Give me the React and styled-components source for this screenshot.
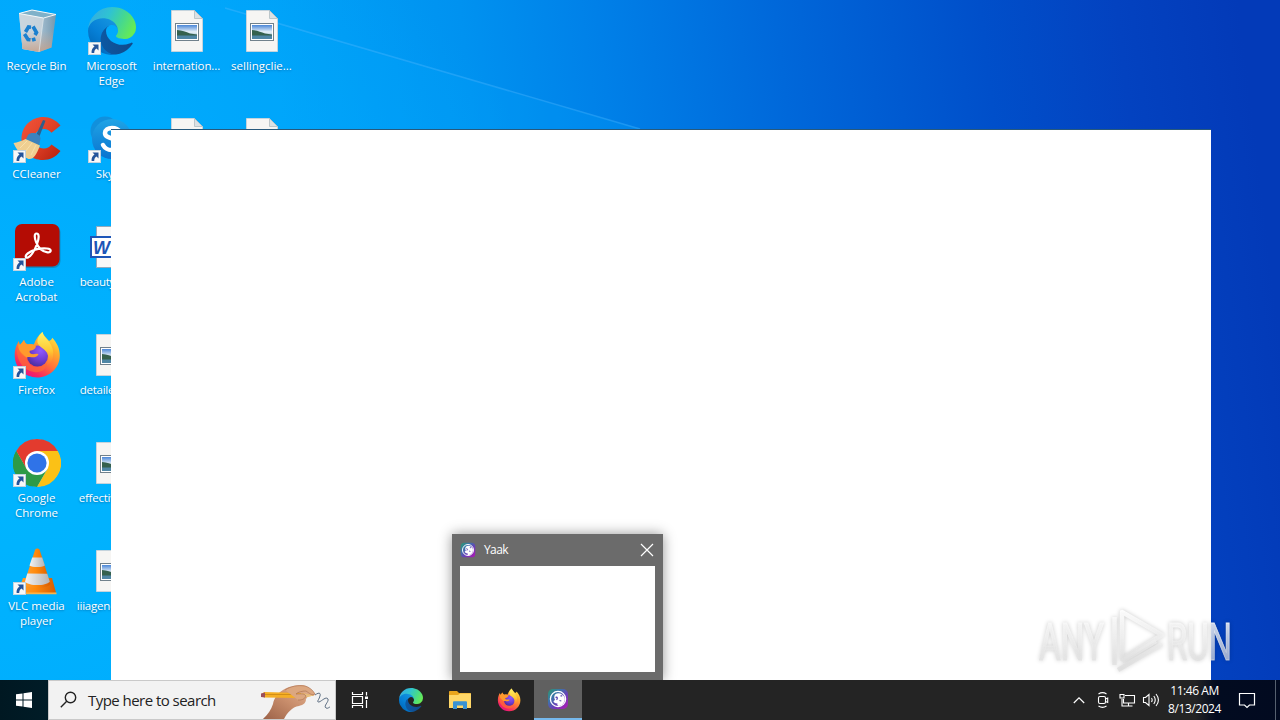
import React from 'react';
import styled, { createGlobalStyle } from 'styled-components';

const GlobalStyle = createGlobalStyle`
  * { box-sizing: border-box; }
  body { margin: 0; overflow: hidden; }
`;

const Screen = styled.div`
  position: relative;
  display: flex;
  flex-direction: column;
  width: 1280px;
  height: 720px;
  overflow: hidden;
  font-family: "Open Sans", "Noto Sans", sans-serif;
  color: #fff;
  background:
    radial-gradient(ellipse 620px 620px at 0 460px, rgba(0, 184, 255, 0.85), rgba(0, 175, 255, 0.35) 60%, rgba(0, 160, 255, 0) 100%),
    linear-gradient(83deg, #00a8fc 15%, #00a2f8 26%, #0092f0 40%, #0080e8 50%, #0068da 63%, #004fca 78%, #0342c0 88%, #033ab8 97%);
`;

const Beam = styled.svg`
  position: absolute;
  left: 0;
  top: 0;
`;

const Desktop = styled.main`
  position: relative;
  flex: 1;
  display: grid;
  grid-auto-flow: column;
  grid-template-rows: repeat(6, 108px);
  grid-auto-columns: 75px;
  align-content: start;
  min-height: 0;
`;

const Shortcut = styled.div`
  display: flex;
  flex-direction: column;
  align-items: center;
  padding: 7px 2px 0 0;
`;

const IconBox = styled.div`
  position: relative;
  width: 48px;
  height: 48px;
  svg { display: block; }
`;

const ArrowBadge = styled.svg`
  position: absolute;
  left: 0;
  bottom: 0;
`;

const Label = styled.span`
  margin-top: 3px;
  width: 75px;
  font-size: 11.5px;
  line-height: 15px;
  letter-spacing: ${(p) => p.$track}px;
  text-align: center;
  white-space: pre;
  text-shadow: 0 1px 2px rgba(0, 50, 100, 0.45);
`;

const AppWindow = styled.section`
  position: absolute;
  left: 111px;
  top: 129px;
  width: 1100px;
  height: 551px;
  background: #fff;
  border-top: 1px solid #28597c;
`;

const Preview = styled.section`
  position: absolute;
  left: 452px;
  top: 534px;
  display: flex;
  flex-direction: column;
  width: 211px;
  height: 146px;
  padding: 0 8px 8px;
  background: #6b6b6b;
  box-shadow: 0 0 12px rgba(0, 0, 0, 0.42);
`;

const PreviewBar = styled.header`
  display: flex;
  align-items: center;
  height: 32px;
  font-size: 12px;
  letter-spacing: -0.6px;
`;

const PreviewTitle = styled.span`
  flex: 1;
  margin-left: 8px;
  padding-bottom: 1px;
`;

const PreviewBody = styled.div`
  flex: 1;
  background: #fff;
`;

const Watermark = styled.svg`
  position: absolute;
  left: 1030px;
  top: 600px;
`;

const Taskbar = styled.footer`
  position: relative;
  display: flex;
  height: 40px;
  background: linear-gradient(90deg, #001822 0, #001c27 48px, #242424 112px, #242424 1195px, #020b20 1216px, #020a20 1280px);
`;

const StartButton = styled.div`
  display: flex;
  align-items: center;
  justify-content: center;
  width: 48px;
`;

const Search = styled.div`
  display: flex;
  align-items: center;
  width: 288px;
  padding-left: 11px;
  background: #f2f2f2;
  border: 1px solid #c9c9c9;
  color: #222;
  font-size: 15px;
  letter-spacing: -0.54px;
  overflow: hidden;
`;

const SearchText = styled.span`
  margin-left: 10px;
  flex: 1;
  white-space: nowrap;
`;

const TaskButton = styled.div`
  display: flex;
  align-items: center;
  justify-content: center;
  width: 48px;
  margin-right: ${(p) => p.$gap ?? 1}px;
  background: ${(p) => (p.$active ? '#606060' : 'transparent')};
  border-bottom: ${(p) => (p.$active ? '2px solid #76b9ed' : '0')};
`;

const Tray = styled.div`
  display: flex;
  align-items: center;
  margin-left: auto;
`;

const TrayIcon = styled.div`
  display: flex;
  align-items: center;
  justify-content: center;
  width: ${(p) => p.$w ?? 24}px;
  height: 40px;
  padding-right: ${(p) => p.$shift ?? 0}px;
`;

const Clock = styled.div`
  width: 64px;
  padding-right: 1px;
  font-size: 12px;
  line-height: 18px;
  letter-spacing: -0.45px;
  text-align: center;
  white-space: nowrap;
`;

const ShowDesktop = styled.div`
  width: 5px;
  height: 40px;
  border-left: 1px solid #56606f;
`;

const Glow = styled.g`
  filter: drop-shadow(0 0 2px rgba(0, 0, 0, 0.24));
`;

const DefsSvg = styled.svg`
  position: absolute;
`;

function Defs() {
  return (
    <DefsSvg width="0" height="0">
      <defs>
        <linearGradient id="edgeA" x1="0" x2="1"><stop stopColor="#0c59a4" /><stop offset="1" stopColor="#114a8b" /></linearGradient>
        <linearGradient id="edgeB" x1="1" y1="0" x2="0.3" y2="1"><stop stopColor="#1b9de2" /><stop offset=".6" stopColor="#0680d7" /><stop offset="1" stopColor="#0067b8" /></linearGradient>
        <linearGradient id="edgeC" x1="0" y1=".2" x2="1" y2=".55"><stop stopColor="#35a9e4" /><stop offset=".4" stopColor="#2fc3d2" /><stop offset=".7" stopColor="#45d890" /><stop offset="1" stopColor="#66eb55" /></linearGradient>
        <linearGradient id="fox" x1=".9" y1="0" x2=".25" y2="1"><stop stopColor="#fff44f" /><stop offset=".3" stopColor="#ffb02c" /><stop offset=".58" stopColor="#ff7139" /><stop offset=".85" stopColor="#f52662" /><stop offset="1" stopColor="#e2128b" /></linearGradient>
        <linearGradient id="foxTail" x1=".6" y1="0" x2=".6" y2="1"><stop stopColor="#fff36a" /><stop offset=".55" stopColor="#ffc933" /><stop offset="1" stopColor="#ff8b2b" stopOpacity="0" /></linearGradient>
        <radialGradient id="globe" cx=".65" cy=".25" r=".8"><stop stopColor="#9059ff" /><stop offset=".6" stopColor="#6d3bd0" /><stop offset="1" stopColor="#4a2f9c" /></radialGradient>
        <linearGradient id="bin" x1="0" x2="1"><stop stopColor="#d3dce3" /><stop offset=".6" stopColor="#aebdca" /><stop offset="1" stopColor="#8097a8" /></linearGradient>
        <linearGradient id="binFoot" x1="0" y1="0" x2="0" y2="1"><stop offset=".45" stopColor="#c8a795" stopOpacity="0" /><stop offset="1" stopColor="#c69f87" stopOpacity=".85" /></linearGradient>
        <linearGradient id="cc" x1="0" y1="0" x2="1" y2="1"><stop stopColor="#f2553b" /><stop offset=".5" stopColor="#e04127" /><stop offset="1" stopColor="#b5200e" /></linearGradient>
        <linearGradient id="sky" x1="0" y1="0" x2="0" y2="1"><stop stopColor="#1fa4e6" /><stop offset="1" stopColor="#0a73cf" /></linearGradient>
        <linearGradient id="photo" x1="0" y1="0" x2="0" y2="1"><stop stopColor="#4a86d8" /><stop offset=".5" stopColor="#e9f2f8" /><stop offset="1" stopColor="#5b93b8" /></linearGradient>
        <linearGradient id="cone" x1="0" x2="1"><stop stopColor="#ffa033" /><stop offset=".45" stopColor="#ff8a0c" /><stop offset="1" stopColor="#d85c00" /></linearGradient>
        <linearGradient id="coneWhite" x1="0" x2="1"><stop stopColor="#f4f4f4" /><stop offset="1" stopColor="#b4b4b4" /></linearGradient>
        <linearGradient id="yaak" x1="0" y1="0" x2="1" y2="1"><stop stopColor="#2a9a6b" /><stop offset=".3" stopColor="#3a78a8" /><stop offset=".6" stopColor="#6a3fb8" /><stop offset="1" stopColor="#b414b4" /></linearGradient>
        <linearGradient id="hand" x1="0" y1="1" x2="1" y2="0"><stop stopColor="#9c6248" /><stop offset=".5" stopColor="#c98e6c" /><stop offset="1" stopColor="#e8b998" /></linearGradient>
        <linearGradient id="wm" gradientUnits="userSpaceOnUse" x1="0" y1="10" x2="0" y2="70"><stop stopColor="#fff" stopOpacity=".9" /><stop offset=".45" stopColor="#f2f2f2" stopOpacity=".75" /><stop offset="1" stopColor="#dadada" stopOpacity=".65" /></linearGradient>
      </defs>
    </DefsSvg>
  );
}

const Edge = ({ size = 48 }) => (
  <svg width={size} height={size} viewBox="0 0 256 256">
    <g transform="translate(-4.63 -4.92)">
      <path fill="url(#edgeA)" d="M235.68 195.46a93.73 93.73 0 0 1-10.54 4.71 101.87 101.87 0 0 1-35.9 6.46c-47.32 0-88.54-32.55-88.54-74.32A31.48 31.48 0 0 1 117.13 104.9c-42.8 1.8-53.8 46.4-53.8 72.53 0 73.88 68.09 81.37 82.76 81.37 7.91 0 19.84-2.3 27-4.56l1.31-.44A128.34 128.34 0 0 0 241 203.1a4 4 0 0 0-5.32-7.64z" />
      <path fill="url(#edgeB)" d="M110.34 246.34A79.2 79.2 0 0 1 87.6 225a80.72 80.72 0 0 1 29.53-120c3.12-1.47 8.45-4.13 15.54-4a32.35 32.35 0 0 1 25.69 13 31.88 31.88 0 0 1 6.36 18.66c0-.21 24.46-79.6-80-79.6-43.9 0-80 41.66-80 78.21a130.15 130.15 0 0 0 12.11 56 128 128 0 0 0 156.38 67.11 75.55 75.55 0 0 1-62.78-8z" />
      <path fill="url(#edgeC)" d="M156.94 153.78c-.81 1.05-3.3 2.5-3.3 5.66 0 2.61 1.7 5.12 4.72 7.23 14.38 10 41.49 8.68 41.56 8.68a59.56 59.56 0 0 0 30.27-8.35 61.38 61.38 0 0 0 30.43-52.88c.26-22.41-8-37.31-11.34-43.91-21.19-41.45-66.93-65.29-116.67-65.29a128 128 0 0 0-128 126.2c.48-36.54 36.8-66.05 80-66.05 3.5 0 23.46.34 42 10.07 16.34 8.58 24.9 18.94 30.85 29.21 6.18 10.67 7.28 24.15 7.28 29.52s-2.74 13.33-7.8 19.91z" />
    </g>
  </svg>
);

const Firefox = ({ size = 48 }) => (
  <svg width={size} height={size} viewBox="0 0 48 48">
    <path fill="url(#fox)" d="M29.5 1C30 4 33 6.3 36 10c2.2-.8 3-2.2 3.2-3.2 4.6 4.7 7.6 11 7.6 17.6 0 12.3-10 22-22.6 22C11.600 46.400 1.700 36.600 1.700 24.300c0-6 2-11.300 4.300-14.300 0 2 .4 3.200.9 4C8.200 12.500 9.700 11 11 9c.7 2.600 2.100 4.200 3.900 4.500 2-.7 4.500-.5 6 .1C22.500 8 26 3.700 29.500 1z" />
    <circle cx="24.500" cy="25" r="10.500" fill="url(#globe)" />
    <path fill="url(#foxTail)" d="M29.500 1c.5 3.500 3.700 6.300 6.600 9.800 3.300 4.400 4.800 9.200 3.900 15-.8 5-4.200 8.300-7.500 9.400 3.600-4.800 3.800-10 .9-14.200-2.500-3.700-7.500-5-8.900-9.500C24 7.500 26.500 3.500 29.500 1z" />
    <path fill="#ff9a2d" d="M6 10c0 2 .4 3.200.9 4C8.200 12.500 9.700 11 11 9c.7 2.600 2.100 4.200 3.900 4.500 3-.8 6-.2 8.100 2-.7 2.500-2.800 4-6.200 4.300-.8 1.300.2 2.700 1.800 3.200 2.200.6 4.300-.8 7 .3-1.600 3.200-5 3.200-7.300 3-2.500-.2-3.500-.4-4.600.4C8 24 3.500 19 6 10z" />
    <path fill="#ff6a35" d="M4 16c2.500 4 5.500 7 9.700 10.700.6 6 5.300 9.400 10.600 9.400 3.500 0 7-1.200 9.500-4.100C33 39 28 42 21 41 10 39.500 3 29 4 16z" opacity=".7" />
  </svg>
);

const Bin = () => (
  <svg width="48" height="48" viewBox="0 0 48 48">
    <path d="M6 6.500 19 3l24 4.500-4.500 33L26 45 9.500 42z" fill="url(#bin)" opacity=".92" />
    <path d="M6 6.500 19 3l24 4.500L30.500 11z" fill="#7fb1c9" />
    <path d="M6 6.500 30.500 11 26 45 9.500 42z" fill="#ccd6dd" opacity=".85" />
    <path d="M9.500 42 6 6.500 30.500 11 43 7.500l-4.500 33L26 45z" fill="url(#binFoot)" />
    <path d="M6 6.500 19 3l24 4.500L30.500 11z" fill="none" stroke="#f4f8fa" strokeWidth="1" />
    <path d="M30.500 11 26 45" fill="none" stroke="#e2eaee" strokeWidth=".7" />
    <g fill="none" stroke="#1b80cf" strokeWidth="3.600">
      <path d="m12.500 25 3-5 2.500.3" /><path d="m20 19.500 3.500 6-1.500 2.500" /><path d="m11.500 27 3.500 5.500 2.500.3" /><path d="m19 33 3.500-1" />
    </g>
  </svg>
);

const CCleaner = () => (
  <svg width="48" height="48" viewBox="0 0 48 48">
    <path d="M47.500 10.500C43 5 37 2 30.500 2 18 2 8.500 11.500 8.500 24S18 45 30 45c7 0 13-3 17.500-9l-9-6.500c-2 2.500-4.500 4-7.500 4-6 0-9.800-4.500-9.800-9.700s4-9.700 9.800-9.700c3 0 5.500 1.400 7.500 3.700z" fill="url(#cc)" />
    <path d="m30 5 2.500.8-7 18-3.500-1.300z" fill="#2d5f8c" />
    <path d="M15 20c3-3.500 12-2 12.500 3.500L26 31l-14-5z" fill="#3b82bd" />
    <path d="M12.500 24c-4 2-8 3.500-12 4 3 7 8 13 15 16 5 .8 8-4.500 11.500-13.500z" fill="#efcf91" />
    <path d="m14 26-7 7m12-5-7 9m11-7-5 10" stroke="#f8e0aa" strokeWidth="1" fill="none" />
  </svg>
);

const Skype = () => (
  <svg width="48" height="48" viewBox="0 0 48 48">
    <circle cx="17" cy="16" r="14.500" fill="#1190dc" /><circle cx="31" cy="32" r="14.500" fill="#0875cc" />
    <circle cx="24" cy="24" r="20" fill="url(#sky)" />
    <path d="M32 17c-2-3-5-4-8-4-4 0-7 2-7 5 0 7 14 4 14 11 0 4-3.500 6-7.500 6-3.500 0-6.500-1.500-8.500-5" fill="none" stroke="#fff" strokeWidth="4.500" strokeLinecap="round" />
  </svg>
);

const Photo = () => (
  <svg width="48" height="48" viewBox="0 0 48 48">
    <path d="M8.500 3.500h23l8 8v33h-31z" fill="#f6f5f3" stroke="#c5d3dc" strokeWidth="1" />
    <path d="M31.500 3.500v8h8z" fill="#dbe1e4" stroke="#b0bcc2" strokeWidth=".8" />
    <rect x="12.500" y="16.500" width="23" height="17" fill="#fff" stroke="#71818c" />
    <rect x="14" y="18" width="20" height="14" fill="url(#photo)" />
    <path d="M14 23c5 .2 9 2 13 3.500l7 1v1.500H14z" fill="#35614e" /><path d="M14 28.500h20V32H14z" fill="#4f86a5" />
  </svg>
);

const Word = () => (
  <svg width="48" height="48" viewBox="0 0 48 48">
    <path d="M8.500 3.500h23l8 8v33h-31z" fill="#f8f8f8" stroke="#93a9bc" />
    <rect x="3" y="14" width="22" height="20" fill="#fff" stroke="#1d55b7" strokeWidth="2" />
    <text x="5" y="30.500" fontFamily="Liberation Sans, sans-serif" fontStyle="italic" fontWeight="700" fontSize="18" fill="#1d55b7">W</text>
  </svg>
);

const Acrobat = () => (
  <svg width="48" height="48" viewBox="0 0 48 48">
    <rect x="2.500" y="2" width="45" height="43" rx="7" fill="#1f4c60" opacity=".35" />
    <rect x="2" y="1" width="44.500" height="42.500" rx="7" fill="#b40c04" />
    <path d="M23.500 10.500c3 0 2.500 5 .7 10-2 5.300-6 12.500-9.200 14-2.500 1-3.400-1.700-.3-4 5.300-4 12.500-5.500 19.300-5 5.200.4 4.500 4.500.5 3.800-5-.7-9.500-5-11.500-10.500-1.500-4-2-8.300.5-8.300z" fill="none" stroke="#fff" strokeWidth="2.200" />
  </svg>
);

const Chrome = () => (
  <svg width="48" height="48" viewBox="0 0 48 48">
    <circle cx="24" cy="24" r="23.500" fill="#fff" />
    <path d="M24 24 3.215 12A24 24 0 0 1 44.785 12H24z" fill="#e33b2e" />
    <path d="M24 12h20.785A24 24 0 0 1 24 48l10.392-18z" fill="#fbc116" />
    <path d="M3.215 12A24 24 0 0 0 24 48l10.392-18H24L13.608 30z" fill="#2d9a47" />
    <path d="M24 12H3.215L13.608 30 24 24z" fill="#e33b2e" />
    <path d="M3.215 12 13.608 30 24 36l-6 11.300A24 24 0 0 1 3.215 12z" fill="#2d9a47" />
    <circle cx="24" cy="24" r="12" fill="#fff" /><circle cx="24" cy="24" r="9.600" fill="#2f73e8" />
  </svg>
);

const Vlc = () => (
  <svg width="48" height="48" viewBox="0 0 48 48">
    <path d="m10 31-5 14.500c0 1 38 1 38 0L39 31z" fill="url(#cone)" />
    <path d="M5 45.500h38.500v1.800H5z" fill="#ffb347" />
    <path d="M22 3c.7-2 4-2 4.700 0L37.500 37c-4 5.500-22.500 5.500-26.500 0z" fill="url(#cone)" />
    <path d="M19.200 10.500h10l2.700 8c-3.500 2-12 2-15.400 0z" fill="url(#coneWhite)" />
    <path d="m14.300 26.500 20 .2 2.500 8c-4.500 4.500-20.500 4.500-24.800 0z" fill="url(#coneWhite)" />
  </svg>
);

const Yaak = ({ size }) => (
  <svg width={size} height={size} viewBox="0 0 22 22">
    <rect x="1" y="1" width="20" height="20" rx="5" fill="url(#yaak)" />
    <circle cx="11" cy="11" r="7.600" fill="none" stroke="#fff" strokeWidth="1.300" />
    <path d="M8 6.500c2-1.800 5-1.800 7 0 2.500 1.500 3.500 4 2.500 6.500-1 3-3 4.500-5.500 5-1.500 0-2-1-1.500-2.500-2.500 0-4-1-4-2.500l1.500-1C7 10 7 8 8 6.500z" fill="#fff" />
    <path d="M8.500 9.500c1.800-1 2.500 1 1 2.200" stroke="#5a49b4" strokeWidth="1.300" fill="none" />
    <path d="M13.500 7.800h1.700M12.500 12.500l1.800.5" stroke="#5a49b4" strokeWidth="1.200" />
  </svg>
);

const Shortcutted = () => (
  <ArrowBadge width="13" height="13" viewBox="0 0 13 13">
    <rect x=".5" y=".5" width="12" height="12" fill="#f8f8f8" stroke="#c2d3df" />
    <path d="M4.500 2.500H10.500V8.500L8.600 6.600C6.800 7.700 6.300 9 6.200 11H3.600C3.300 8.300 4.300 6 6.500 4.500z" fill="#24549b" />
  </ArrowBadge>
);

const SHORTCUTS = [
  { name: 'Recycle Bin', Icon: Bin },
  { name: 'CCleaner', Icon: CCleaner, linked: true },
  { name: 'Adobe\nAcrobat', Icon: Acrobat, linked: true },
  { name: 'Firefox', Icon: Firefox, linked: true },
  { name: 'Google\nChrome', Icon: Chrome, linked: true },
  { name: 'VLC media\nplayer', Icon: Vlc, linked: true },
  { name: 'Microsoft\nEdge', Icon: Edge, linked: true },
  { name: 'Skype', Icon: Skype, linked: true },
  { name: 'beautyfunl...', Icon: Word, track: -0.25 },
  { name: 'detailedsel...', Icon: Photo, track: -0.25 },
  { name: 'effectivecal...', Icon: Photo, track: -0.25 },
  { name: 'iiiagencyme...', Icon: Photo, track: -0.2 },
  { name: 'internation...', Icon: Photo, track: -0.1 },
  { name: 'mailparty...', Icon: Photo },
  {},
  {},
  {},
  {},
  { name: 'sellingclie...', Icon: Photo },
  { name: 'systemso...', Icon: Photo },
];

export default function App() {
  return (
    <Screen>
      <GlobalStyle />
      <Defs />
      <Beam width="1280" height="720" viewBox="0 0 1280 720">
        <path d="M225 8 640 129" stroke="#4cb8ff" strokeWidth="1.600" opacity=".4" />
        <path d="M190 0 640 129H0V0z" fill="#00a8ff" opacity=".2" />
      </Beam>
      <Desktop>
        {SHORTCUTS.map(({ name, Icon, linked, track = 0 }, i) => (
          <Shortcut key={i}>
            {Icon && <IconBox><Icon />{linked && <Shortcutted />}</IconBox>}
            {name && <Label $track={track}>{name}</Label>}
          </Shortcut>
        ))}
        <AppWindow />
        <Preview>
          <PreviewBar>
            <Yaak size={16} />
            <PreviewTitle>Yaak</PreviewTitle>
            <svg width="16" height="32" viewBox="0 0 16 32"><path d="m2 10 12 12m0-12-12 12" stroke="#fff" strokeWidth="1.200" /></svg>
          </PreviewBar>
          <PreviewBody />
        </Preview>
      </Desktop>
      <Taskbar>
        <StartButton>
          <svg width="16" height="16" viewBox="0 0 16 16"><path d="M0 2.300 6.500 1.400V7.500H0zM7.500 1.250 16 0v7.500H7.500zM0 8.500h6.500v6.100L0 13.700zM7.500 8.500H16V16l-8.500-1.250z" fill="#fff" /></svg>
        </StartButton>
        <Search>
          <svg width="18" height="18" viewBox="0 0 18 18" fill="none" stroke="#222" strokeWidth="1.400"><circle cx="10.500" cy="6.500" r="5.200" /><path d="M6.700 10.300.8 16.200" /></svg>
          <SearchText>Type here to search</SearchText>
          <svg width="74" height="38" viewBox="0 0 74 38">
            <path d="M2 38c5-5 8-9 10-15 1-6 5-11 10-14 4-3 12-5 20-5 4 1 8 4 11 8 2 3-2 4-5 2l-3 4c0 5-4 6-7 7-7 1-12 7-15 13z" fill="url(#hand)" />
            <path d="m1 13 2-2 37 1 13 2.500-13 2.500-37-.5z" fill="#f5ae25" /><path d="M1 13.500h39" stroke="#c98714" strokeWidth=".8" /><path d="m0 12.500 4-1v5l-4-.5z" fill="#9b4f5a" /><path d="m40 12 13 2.500-13 2.500z" fill="#e6be85" />
            <path d="M24 9c6-4 13-5 20-4 4 1 8 4 10 8-3 2-6-1-9-3-4 0-8 1-10 3 5 0 8-1 10 2-2 4-5 4-8 4" fill="#dca780" stroke="#a66b4c" strokeWidth=".6" />
            <path d="M54 14c4-3 6-2 5 1-1 4-4 6-1 6 3-1 7-6 9-3 1 3-5 7-2 9 2 1 3-1 4-1" fill="none" stroke="#4b5d74" strokeWidth=".9" />
          </svg>
        </Search>
        <TaskButton $gap={3}>
          <svg width="18" height="18" viewBox="0 0 18 18" fill="none" stroke="#fff" strokeWidth="1.200"><path d="M1.500 1v2.500h10V1M1.500 17v-2.500h10V17M1.500 5.500h10v7h-10zM15.500 1v3.500M15.500 9v8" /><path d="M14 5.500h3V8h-3z" fill="#fff" stroke="none" /></svg>
        </TaskButton>
        <TaskButton><Edge size={24} /></TaskButton>
        <TaskButton>
          <svg width="22" height="20" viewBox="0 0 22 20"><path d="M0 2c0-.6.4-1 1-1h7l2 2h11c.6 0 1 .4 1 1v14H0z" fill="#e9a51d" /><path d="M0 5h9l2-1.500h11V18H0z" fill="#ffd768" /><path d="M4 19v-6.500c0-.8.5-1.200 1.200-1.200h11.600c.7 0 1.200.4 1.200 1.200V19h-4v-3.500H8V19z" fill="#3992d2" /></svg>
        </TaskButton>
        <TaskButton><Firefox size={24} /></TaskButton>
        <TaskButton $active><Yaak size={22} /></TaskButton>
        <Tray>
          <TrayIcon><svg width="12" height="8" viewBox="0 0 12 8"><path d="m.8 7 5.200-5.200L11.200 7" fill="none" stroke="#fff" strokeWidth="1.200" /></svg></TrayIcon>
          <TrayIcon><svg width="14" height="18" viewBox="0 0 14 18" fill="none" stroke="#fff" strokeWidth="1.100"><rect x="2.500" y="5.500" width="7" height="7" rx="1.500" /><path d="m9.500 8 2.200-1v4.500l-2.200-1M2.500 3c2.500-1.700 5.500-1.700 8 0M2.500 15c2.500 1.700 5.500 1.700 8 0" /></svg></TrayIcon>
          <TrayIcon><svg width="17" height="16" viewBox="0 0 17 16" fill="none" stroke="#fff" strokeWidth="1.100"><path d="M6 3.500h9.500v7.500h-11V7M9.500 11v2.500M5.500 14h8M3 7v7h2.500" /><path d="M1 2.500h4v3.500H1z" /></svg></TrayIcon>
          <TrayIcon><svg width="18" height="16" viewBox="0 0 18 16" fill="none" stroke="#fff" strokeWidth="1.100"><path d="M1.500 5.500h2l3.500-3v11l-3.500-3h-2zM9.500 6c.8 1.200.8 2.800 0 4M11.800 4c1.800 2.500 1.800 5.500 0 8M14 2c3 3.700 3 8.300 0 12" /></svg></TrayIcon>
          <Clock>11:46 AM<br />8/13/2024</Clock>
          <TrayIcon $w={48} $shift={8}><svg width="18" height="18" viewBox="0 0 18 18"><path d="M1.500 2.500h15v11.500H11.500L9 16.500 6.500 14H1.500z" fill="none" stroke="#fff" strokeWidth="1.200" /></svg></TrayIcon>
          <ShowDesktop />
        </Tray>
      </Taskbar>
      <Watermark width="210" height="80" viewBox="0 0 210 80">
        <Glow>
          <g fill="url(#wm)" stroke="url(#wm)" strokeWidth="1" fontFamily="Roboto, sans-serif" fontSize="52">
            <text x="9" y="59.500" textLength="65" lengthAdjust="spacingAndGlyphs">ANY</text>
            <text x="137" y="59.500" textLength="65" lengthAdjust="spacingAndGlyphs">RUN</text>
          </g>
          <g fill="none" stroke="url(#wm)" strokeWidth="4.500" strokeLinejoin="round">
            <path d="M92 59V12l40 23z" /><path d="M84.500 17v48" /><path d="m88 70 44-26M92 61l34-20" />
          </g>
        </Glow>
      </Watermark>
    </Screen>
  );
}
